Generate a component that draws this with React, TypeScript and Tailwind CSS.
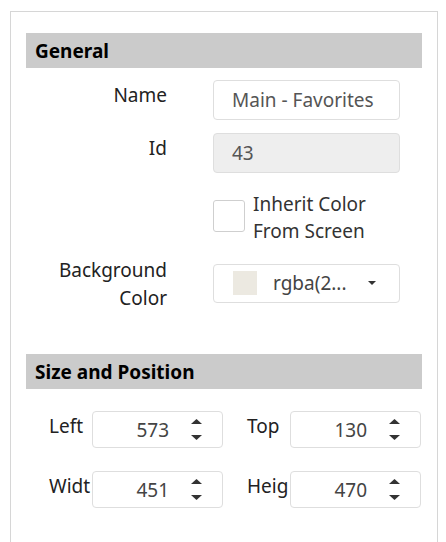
const font = { fontFamily: '"Noto Sans", "Open Sans", sans-serif' };

function Spinner() {
  return (
    <div className="flex flex-col items-center gap-[11px]">
      <svg width="11" height="5" viewBox="0 0 11 5">
        <path d="M0 5 L5.5 0 L11 5 Z" fill="#333" />
      </svg>
      <svg width="11" height="5" viewBox="0 0 11 5">
        <path d="M0 0 L11 0 L5.5 5 Z" fill="#333" />
      </svg>
    </div>
  );
}

function NumberField({ label, value }: { label: string; value: string }) {
  return (
    <div className="flex items-center">
      <div className="w-[43px] whitespace-nowrap pb-[8px] text-[#222]">{label}</div>
      <div className="flex h-[37px] w-[131px] items-center justify-end rounded-[4px] border border-[#dedede] bg-white pr-[20px]">
        <span className="text-[#444]">{value}</span>
        <div className="ml-[22px]">
          <Spinner />
        </div>
      </div>
    </div>
  );
}

export default function App() {
  return (
    <div className="min-h-[542px] bg-white pl-[10px] pt-[11px] text-[19px] leading-[26px]" style={font}>
      <div className="h-[531px] w-[428px] border-l border-r border-t border-[#d6d6d6] px-[15px] pt-[21px]">
        <div className="flex h-[35px] items-center bg-[#cbcbcb] pl-[9px] font-bold text-black">General</div>

        <div className="mt-[12px] grid grid-cols-[141px_187px] gap-x-[46px] gap-y-[13px]">
          <div className="flex items-center justify-end pb-[10px] text-[#222]">Name</div>
          <div className="flex h-[40px] items-center rounded-[4px] border border-[#dedede] bg-white pl-[18px] text-[#555]">
            Main - Favorites
          </div>

          <div className="flex items-center justify-end pb-[10px] text-[#222]">Id</div>
          <div className="flex h-[40px] items-center rounded-[4px] border border-[#dedede] bg-[#eeeeee] pl-[18px] text-[#555]">
            43
          </div>

          <div />
          <div className="mt-[5px] flex h-[52px] items-start gap-[8px]">
            <div className="mt-[9px] h-[32px] w-[32px] rounded-[3px] border border-[#cfcfcf] bg-white" />
            <div className="leading-[27px] text-[#333]">
              Inherit Color
              <br />
              From Screen
            </div>
          </div>

          <div className="flex flex-col items-end justify-center leading-[28px] text-[#222]">
            <span>Background</span>
            <span>Color</span>
          </div>
          <div className="mb-[2px] flex h-[39px] items-center self-center rounded-[4px] border border-[#dedede] bg-white pl-[19px] pr-[23px]">
            <div className="h-[24px] w-[24px] bg-[#ece9e1]" />
            <span className="ml-[16px] text-[#444]">rgba(2...</span>
            <svg className="ml-auto" width="8" height="4" viewBox="0 0 8 4">
              <path d="M0 0 L8 0 L4 4 Z" fill="#333" />
            </svg>
          </div>
        </div>

        <div className="mt-[42px] flex h-[35px] items-center bg-[#cbcbcb] pl-[9px] font-bold text-black">
          Size and Position
        </div>

        <div className="mt-[22px] grid grid-cols-[174px_174px] gap-x-[24px] gap-y-[23px] pl-[23px]">
          <NumberField label="Left" value="573" />
          <NumberField label="Top" value="130" />
          <NumberField label="Widt" value="451" />
          <NumberField label="Heig" value="470" />
        </div>
      </div>
    </div>
  );
}
